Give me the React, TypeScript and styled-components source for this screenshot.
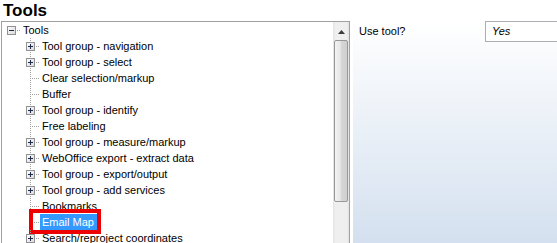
import styled, { createGlobalStyle } from "styled-components";

const GlobalStyle = createGlobalStyle`
  html, body {
    margin: 0;
    background: #ffffff;
    font-family: "Liberation Sans", Arial, sans-serif;
  }
`;

type Item = { label: string; group?: boolean; selected?: boolean };

const items: Item[] = [
  { label: "Tool group - navigation", group: true },
  { label: "Tool group - select", group: true },
  { label: "Clear selection/markup" },
  { label: "Buffer" },
  { label: "Tool group - identify", group: true },
  { label: "Free labeling" },
  { label: "Tool group - measure/markup", group: true },
  { label: "WebOffice export - extract data", group: true },
  { label: "Tool group - export/output", group: true },
  { label: "Tool group - add services", group: true },
  { label: "Bookmarks" },
  { label: "Email Map", selected: true },
  { label: "Search/reproject coordinates", group: true },
];

function Expander({ open }: { open?: boolean }) {
  return (
    <ExpanderBox width="9" height="9" viewBox="0 0 9 9">
      <defs>
        <linearGradient id={open ? "exo" : "exc"} x1="0" y1="0" x2="1" y2="1">
          <stop offset="0" stopColor="#ffffff" />
          <stop offset="1" stopColor="#d8d8d8" />
        </linearGradient>
      </defs>
      <rect x="0.5" y="0.5" width="8" height="8" fill={`url(#${open ? "exo" : "exc"})`} stroke="#919191" />
      <path d="M2 4.5h5" stroke="#1e2a4a" />
      {!open && <path d="M4.5 2v5" stroke="#1e2a4a" />}
    </ExpanderBox>
  );
}

export default function App() {
  return (
    <>
      <GlobalStyle />
      <Page>
        <Title>Tools</Title>
        <Main>
          <TreePanel>
            <TreeBody>
              <Row $depth={0}>
                <Gutter>
                  <HLine />
                  <Expander open />
                </Gutter>
                <Label>Tools</Label>
              </Row>
              {items.map((item) => (
                <Row key={item.label} $depth={1}>
                  <Gutter>
                    <VLine />
                    <HLine />
                    {item.group && <Expander />}
                  </Gutter>
                  <Label $selected={item.selected}>
                    {item.label}
                    {item.selected && <Marker />}
                  </Label>
                </Row>
              ))}
            </TreeBody>
            <ScrollBar>
              <ArrowButton>
                <svg width="7" height="4" viewBox="0 0 7 4">
                  <path d="M0 4L3.5 0L7 4Z" fill="#3c3c3c" />
                </svg>
              </ArrowButton>
              <Thumb />
            </ScrollBar>
          </TreePanel>
          <PropertyPanel>
            <Field>
              <FieldLabel>Use tool?</FieldLabel>
              <ValueBox>Yes</ValueBox>
            </Field>
          </PropertyPanel>
        </Main>
      </Page>
    </>
  );
}

const Page = styled.div`
  height: 243px;
  overflow: hidden;
  display: flex;
  flex-direction: column;
`;

const Title = styled.h1`
  margin: 0;
  padding-left: 3px;
  font-size: 17px;
  line-height: 21px;
  font-weight: bold;
  color: #000;
`;

const Main = styled.div`
  flex: 1;
  min-height: 0;
  display: flex;
  gap: 3px;
  padding-left: 1px;
`;

const TreePanel = styled.div`
  width: 349px;
  height: 260px;
  box-sizing: border-box;
  border: 1px solid #a0a0a0;
  border-bottom: none;
  display: flex;
  background: #fff;
`;

const TreeBody = styled.div`
  flex: 1;
  overflow: hidden;
`;

const Row = styled.div<{ $depth: number }>`
  display: flex;
  height: 16px;
  padding-left: ${(p) => p.$depth * 19}px;
`;

const Gutter = styled.div`
  position: relative;
  width: 19px;
  flex: none;
`;

const VLine = styled.div`
  position: absolute;
  left: 9px;
  top: 0;
  bottom: 0;
  width: 1px;
  background: repeating-linear-gradient(to bottom, #a0a0a0 0 1px, transparent 1px 2px);
`;

const HLine = styled.div`
  position: absolute;
  left: 11px;
  right: 0;
  top: 8px;
  height: 1px;
  background: repeating-linear-gradient(to right, #a0a0a0 0 1px, transparent 1px 2px);
`;

const ExpanderBox = styled.svg`
  position: absolute;
  left: 5px;
  top: 4px;
  display: block;
`;

const Label = styled.span<{ $selected?: boolean }>`
  position: relative;
  height: 16px;
  padding: 0 3px 0 2px;
  font-size: 11px;
  line-height: 16px;
  white-space: nowrap;
  color: ${(p) => (p.$selected ? "#ffffff" : "#000000")};
  background: ${(p) => (p.$selected ? "#3399ff" : "transparent")};
`;

const Marker = styled.span`
  position: absolute;
  left: -11px;
  top: -5px;
  right: -4px;
  bottom: -4px;
  border: 4px solid #ee0000;
`;

const ScrollBar = styled.div`
  width: 16px;
  flex: none;
  display: flex;
  flex-direction: column;
  align-items: center;
  background: linear-gradient(to right, #e3e3e3, #efefef 15%, #efefef 85%, #e3e3e3);
`;

const ArrowButton = styled.div`
  height: 17px;
  width: 100%;
  display: flex;
  align-items: center;
  justify-content: center;
  padding-top: 2px;
  box-sizing: border-box;
`;

const Thumb = styled.div`
  margin-top: 1px;
  width: 14px;
  height: 162px;
  box-sizing: border-box;
  border: 1px solid #979797;
  border-radius: 2px;
  background: linear-gradient(to right, #f3f3f3, #e6e6e6 45%, #d6d6d6 55%, #cfcfcf);
`;

const PropertyPanel = styled.div`
  flex: 1;
  min-width: 0;
  overflow: hidden;
  background: linear-gradient(to bottom, #ffffff, #d4e0ef);
`;

const Field = styled.div`
  display: grid;
  grid-template-columns: 132px 140px;
  align-items: center;
`;

const FieldLabel = styled.span`
  padding-left: 6px;
  font-size: 11px;
  line-height: 21px;
  color: #000;
`;

const ValueBox = styled.div`
  height: 21px;
  box-sizing: border-box;
  border: 1px solid #abadb3;
  background: #fff;
  padding-left: 6px;
  font-size: 11px;
  font-style: italic;
  line-height: 19px;
  color: #000;
`;
